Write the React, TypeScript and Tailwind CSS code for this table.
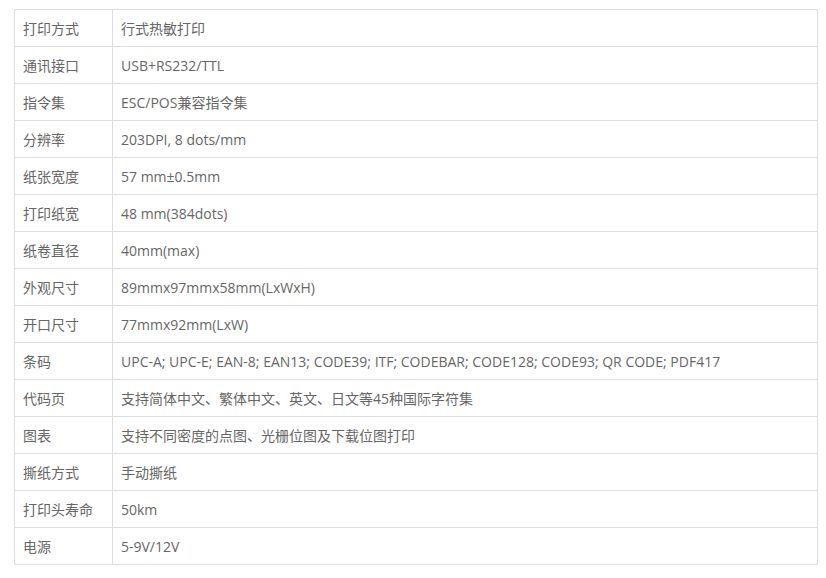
import React from 'react';

const specs = [
  ['打印方式', '行式热敏打印'],
  ['通讯接口', 'USB+RS232/TTL'],
  ['指令集', 'ESC/POS兼容指令集'],
  ['分辨率', '203DPI, 8 dots/mm'],
  ['纸张宽度', '57 mm±0.5mm'],
  ['打印纸宽', '48 mm(384dots)'],
  ['纸卷直径', '40mm(max)'],
  ['外观尺寸', '89mmx97mmx58mm(LxWxH)'],
  ['开口尺寸', '77mmx92mm(LxW)'],
  ['条码', 'UPC-A; UPC-E; EAN-8; EAN13; CODE39; ITF; CODEBAR; CODE128; CODE93; QR CODE; PDF417'],
  ['代码页', '支持简体中文、繁体中文、英文、日文等45种国际字符集'],
  ['图表', '支持不同密度的点图、光栅位图及下载位图打印'],
  ['撕纸方式', '手动撕纸'],
  ['打印头寿命', '50km'],
  ['电源', '5-9V/12V'],
];

export default function App() {
  return (
    <div className="bg-white w-[826px] h-[578px] pt-[9px] pl-[14px] font-['Open_Sans','Noto_Sans_CJK_SC',sans-serif] text-[14px] text-[#666]">
      <table className="border-collapse w-[804px] table-fixed">
        <tbody>
          {specs.map(([k, v]) => (
            <tr key={k} className="h-[37px]">
              <td className="w-[98px] border border-[#ddd] px-2 align-middle whitespace-nowrap">{k}</td>
              <td className="border border-[#ddd] px-2 align-middle whitespace-nowrap">{v}</td>
            </tr>
          ))}
        </tbody>
      </table>
    </div>
  );
}
